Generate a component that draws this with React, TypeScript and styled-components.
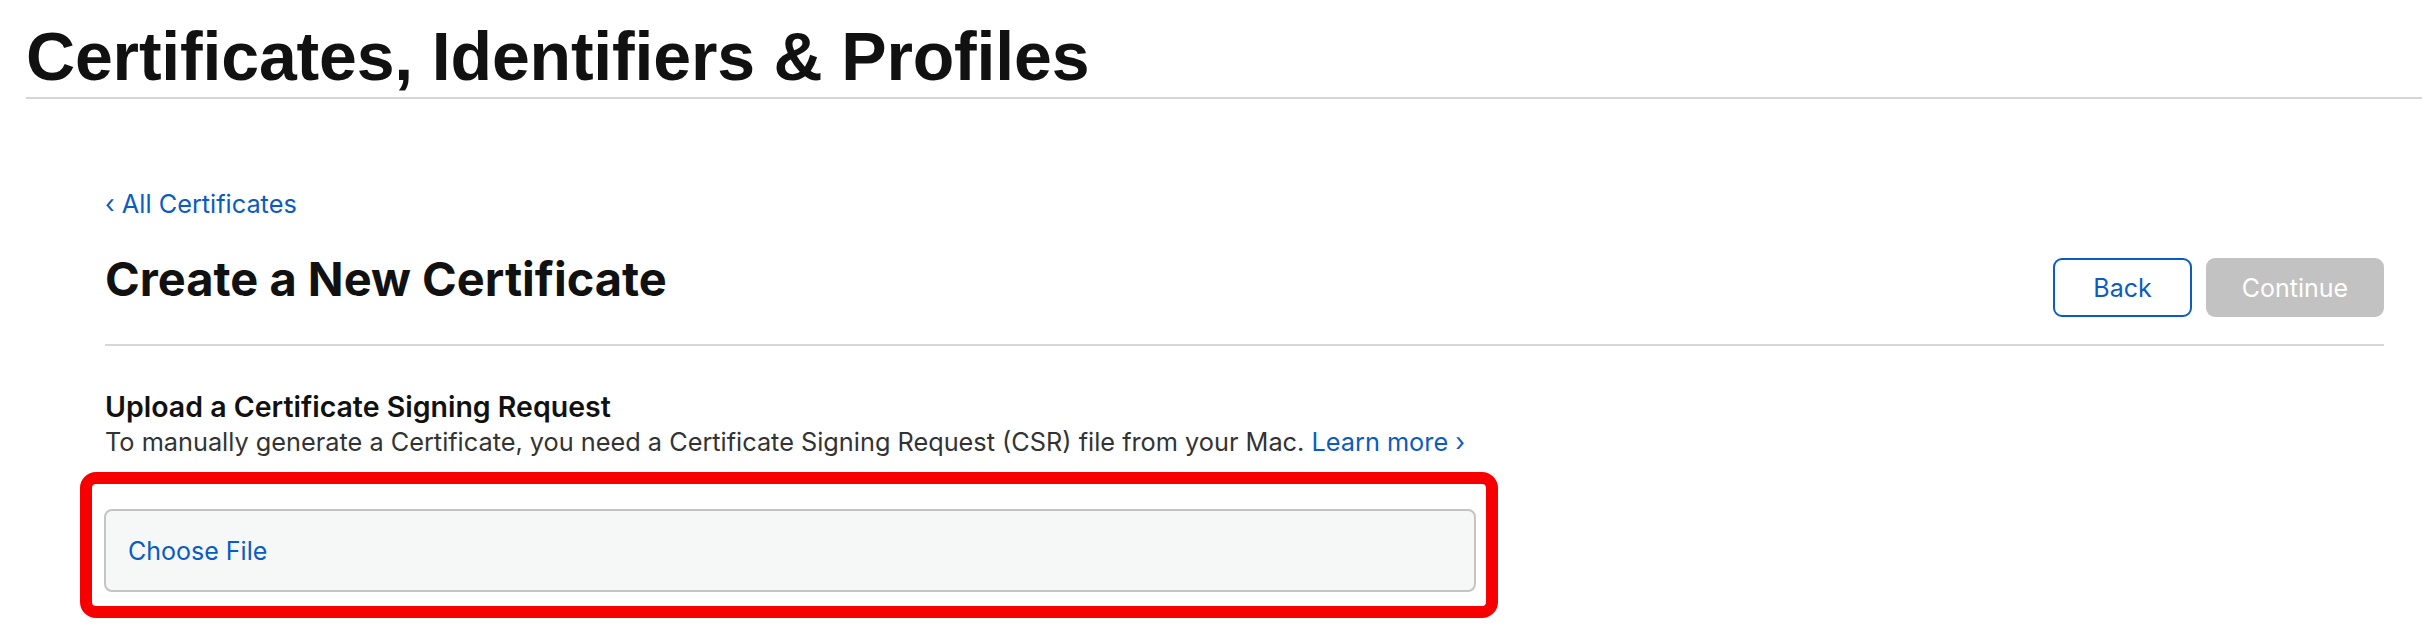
import React from 'react';
import styled, { createGlobalStyle } from 'styled-components';

const GlobalStyle = createGlobalStyle`
  html, body {
    margin: 0;
    padding: 0;
    background: #fff;
  }
  body {
    font-family: Inter, "Liberation Sans", sans-serif;
    color: #1d1d1f;
  }
`;

const Page = styled.div`
  width: 2422px;
`;

const Header = styled.header`
  margin-left: 26px;
  padding-top: 22px;
  padding-bottom: 7px;
  border-bottom: 2px solid #d6d6d6;
`;

const SiteTitle = styled.h1`
  margin: 0;
  font-family: "Liberation Sans", Arial, sans-serif;
  font-weight: 700;
  font-size: 68px;
  line-height: 68px;
  letter-spacing: -0.17px;
  color: #111;
`;

const Main = styled.main`
  margin: 0 38px 0 105px;
  padding-top: 90px;
`;

const BackLink = styled.a`
  display: inline-block;
  font-size: 25.3px;
  line-height: 30px;
  color: #0a5cc2;
  text-decoration: none;
`;

const TitleRow = styled.div`
  display: flex;
  justify-content: space-between;
  align-items: flex-start;
  padding-top: 39px;
  padding-bottom: 27px;
  border-bottom: 2px solid #d6d6d6;
`;

const PageTitle = styled.h2`
  margin: 0;
  font-size: 47px;
  font-weight: 700;
  line-height: 42px;
  color: #111;
`;

const Actions = styled.div`
  display: flex;
  gap: 14px;
`;

const Button = styled.button<{ $variant: 'outline' | 'disabled' }>`
  box-sizing: border-box;
  height: 59px;
  padding: 0;
  border-radius: 9px;
  font-family: Inter, "Liberation Sans", sans-serif;
  font-size: 25px;
  cursor: ${(p) => (p.$variant === 'outline' ? 'pointer' : 'default')};
  width: ${(p) => (p.$variant === 'outline' ? '139px' : '178px')};
  border: 2px solid ${(p) => (p.$variant === 'outline' ? '#0a5cc2' : '#c2c2c2')};
  background: ${(p) => (p.$variant === 'outline' ? '#fff' : '#c2c2c2')};
  color: ${(p) => (p.$variant === 'outline' ? '#0a5cc2' : '#fff')};
`;

const Section = styled.section`
  padding-top: 44px;
`;

const SectionTitle = styled.h3`
  margin: 0;
  font-size: 28.5px;
  font-weight: 600;
  line-height: 34px;
  color: #111;
`;

const Description = styled.p`
  margin: 0;
  font-size: 25.3px;
  line-height: 36px;
  color: #333;
`;

const InlineLink = styled.a`
  color: #0a5cc2;
  text-decoration: none;
`;

// red annotation drawn round the upload field
const Highlight = styled.div`
  box-sizing: border-box;
  width: 1418px;
  margin: 12px 0 0 -25px;
  padding: 25px 10px 14px 12px;
  border: 12px solid #f70000;
  border-radius: 16px;
`;

const FileField = styled.label`
  box-sizing: border-box;
  height: 83px;
  display: flex;
  align-items: center;
  padding-left: 22px;
  border: 2px solid #c4c4c4;
  border-radius: 8px;
  background: #f6f7f7;
  cursor: pointer;
  input {
    display: none;
  }
`;

const FileLabel = styled.span`
  font-size: 25px;
  color: #0a5cc2;
`;

function App() {
  return (
    <Page>
      <GlobalStyle />
      <Header>
        <SiteTitle>Certificates, Identifiers &amp; Profiles</SiteTitle>
      </Header>
      <Main>
        <BackLink href="#">‹ All Certificates</BackLink>
        <TitleRow>
          <PageTitle>Create a New Certificate</PageTitle>
          <Actions>
            <Button $variant="outline">Back</Button>
            <Button $variant="disabled" disabled>Continue</Button>
          </Actions>
        </TitleRow>
        <Section>
          <SectionTitle>Upload a Certificate Signing Request</SectionTitle>
          <Description>
            To manually generate a Certificate, you need a Certificate Signing Request (CSR) file from your Mac.{' '}
            <InlineLink href="#">Learn more ›</InlineLink>
          </Description>
          <Highlight>
            <FileField>
              <input type="file" />
              <FileLabel>Choose File</FileLabel>
            </FileField>
          </Highlight>
        </Section>
      </Main>
    </Page>
  );
}

export default App;
